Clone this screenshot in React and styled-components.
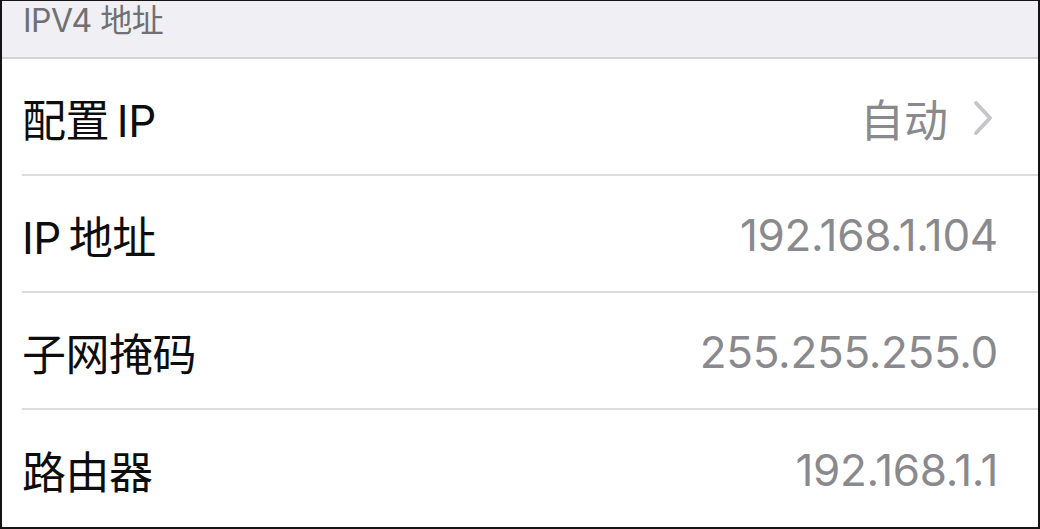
import styled, { createGlobalStyle } from 'styled-components'

const GlobalStyle = createGlobalStyle`
  html, body {
    margin: 0;
    padding: 0;
    background: #ffffff;
  }
  body {
    font-family: Inter, "Liberation Sans", "Noto Sans CJK SC", sans-serif;
  }
`

const Frame = styled.div`
  width: 1040px;
  height: 529px;
  box-sizing: border-box;
  border: 2px solid #141414;
  border-top-width: 1px;
  overflow: hidden;
  background: #ffffff;
  display: flex;
  flex-direction: column;
`

const SectionHeader = styled.div`
  height: 58px;
  flex-shrink: 0;
  background: #efeff4;
  border-bottom: 2px solid #d4d4d8;
  box-sizing: border-box;
  padding: 0 0 0 21px;
  display: flex;
  align-items: flex-start;
  color: #6f6f74;
  font-size: 32px;
  line-height: 40px;
  letter-spacing: -0.5px;
`

const List = styled.div`
  display: flex;
  flex-direction: column;
`

const Row = styled.div`
  height: 117px;
  box-sizing: border-box;
  margin-left: 20px;
  padding-right: 40px;
  display: flex;
  align-items: center;
  justify-content: space-between;
  border-bottom: ${({ $last }) => ($last ? 'none' : '2px solid #dcdcdf')};
`

const Label = styled.div`
  color: #0d0d0d;
  font-size: 44px;
  letter-spacing: -0.5px;
  word-spacing: -4px;
  padding-top: 2px;
`

const Value = styled.div`
  display: flex;
  align-items: center;
  gap: 24px;
  color: #8a8a8e;
  font-size: 44px;
  letter-spacing: ${({ $numeric }) => ($numeric ? '-0.3px' : '0')};
  padding-top: 2px;
`

const Chevron = () => (
  <svg width="22" height="36" viewBox="0 0 22 36" style={{ marginRight: '4px' }}>
    <path d="M4 3 L18 18 L4 33" fill="none" stroke="#c5c5ca" strokeWidth="4" strokeLinecap="round" strokeLinejoin="round" />
  </svg>
)

const rows = [
  { label: '配置 IP', value: '自动', chevron: true },
  { label: 'IP 地址', value: '192.168.1.104' },
  { label: '子网掩码', value: '255.255.255.0' },
  { label: '路由器', value: '192.168.1.1' },
]

const App = () => (
  <>
    <GlobalStyle />
    <Frame>
      <SectionHeader>IPV4 地址</SectionHeader>
      <List>
        {rows.map(({ label, value, chevron }, i) => (
          <Row key={label} $last={i === rows.length - 1}>
            <Label>{label}</Label>
            <Value $numeric={!chevron}>
              {value}
              {chevron && <Chevron />}
            </Value>
          </Row>
        ))}
      </List>
    </Frame>
  </>
)

export default App
